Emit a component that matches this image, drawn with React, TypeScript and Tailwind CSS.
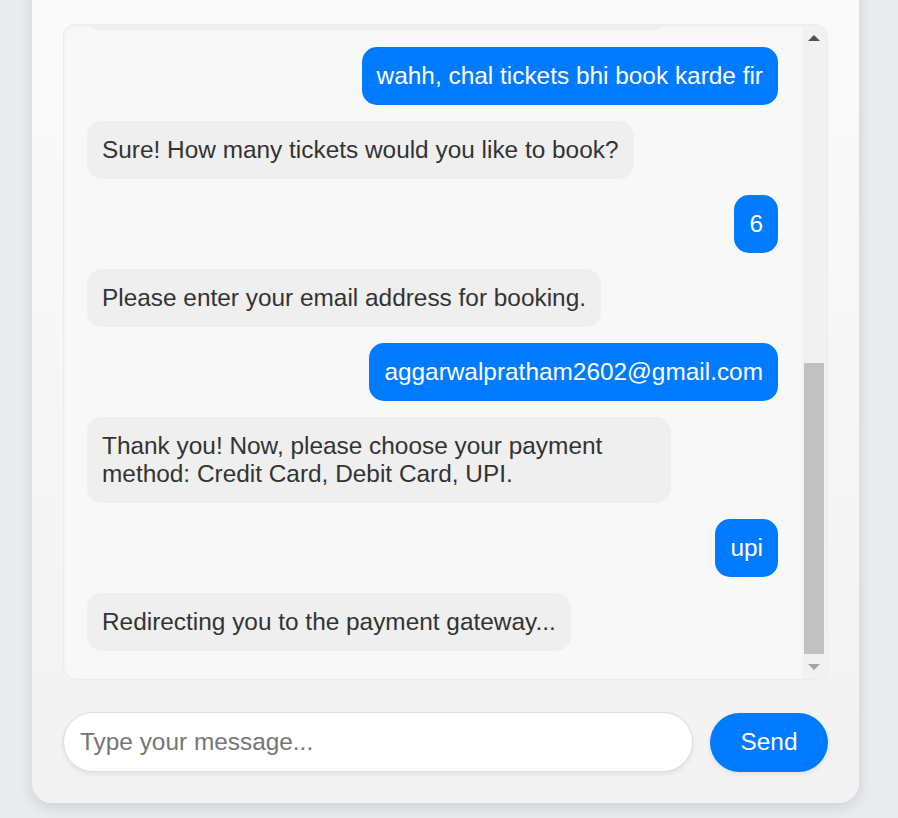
import React from "react";

type Msg = { from: "bot" | "user"; text: string };

const messages: Msg[] = [
  { from: "user", text: "wahh, chal tickets bhi book karde fir" },
  { from: "bot", text: "Sure! How many tickets would you like to book?" },
  { from: "user", text: "6" },
  { from: "bot", text: "Please enter your email address for booking." },
  { from: "user", text: "aggarwalpratham2602@gmail.com" },
  {
    from: "bot",
    text: "Thank you! Now, please choose your payment method: Credit Card, Debit Card, UPI.",
  },
  { from: "user", text: "upi" },
  { from: "bot", text: "Redirecting you to the payment gateway..." },
];

export default function App() {
  return (
    <div
      className="h-[818px] w-[898px] overflow-hidden bg-[#e9ecef]"
      style={{ fontFamily: '"Liberation Sans", Arial, sans-serif' }}
    >
      <div className="ml-8 mt-[-57px] w-[827px] rounded-[20px] bg-gradient-to-b from-[#fbfbfb] to-[#f2f2f2] px-[31px] pb-[31px] pt-[81px] shadow-[0_4px_14px_rgba(0,0,0,0.12)]">
        <div className="flex h-[656px] overflow-hidden rounded-xl border border-[#ececec] bg-[#f8f8f8] shadow-[inset_0_1px_4px_rgba(0,0,0,0.04)]">
          <div className="flex flex-1 flex-col gap-4 pl-[23px] pr-6">
            <div className="mt-[-52px] h-[58px] w-[581px] shrink-0 self-start rounded-[15px] bg-[#efefef]" />
            {messages.map((m, i) =>
              m.from === "user" ? (
                <div
                  key={i}
                  className="max-w-[583px] self-end rounded-[15px] bg-[#007bff] px-[15px] py-[15px] text-[24.4px] leading-[28px] text-white"
                >
                  {m.text}
                </div>
              ) : (
                <div
                  key={i}
                  className="max-w-[584px] self-start rounded-[15px] bg-[#efefef] px-[15px] py-[15px] text-[24.4px] leading-[28px] text-[#333333]"
                >
                  {m.text}
                </div>
              )
            )}
          </div>
          <div className="flex w-[25px] shrink-0 flex-col items-center bg-[#f1f1f1] pr-px">
            <div className="flex h-[25px] w-full items-center justify-center">
              <div className="h-0 w-0 border-x-[6px] border-b-[6px] border-x-transparent border-b-[#505050]" />
            </div>
            <div className="flex w-full flex-1 flex-col justify-end px-[2px]">
              <div className="h-[291px] w-full bg-[#c1c1c1]" />
            </div>
            <div className="flex h-[25px] w-full items-center justify-center">
              <div className="h-0 w-0 border-x-[6px] border-t-[6px] border-x-transparent border-t-[#a3a3a3]" />
            </div>
          </div>
        </div>
        <div className="mt-8 flex items-center gap-[17px]">
          <input
            type="text"
            placeholder="Type your message..."
            className="h-[60px] flex-1 rounded-full border border-[#dddddd] bg-white px-[16px] text-[24.4px] text-[#333333] shadow-[0_2px_5px_rgba(0,0,0,0.08)] outline-none placeholder:text-[#757575]"
          />
          <button className="h-[59px] w-[118px] rounded-full bg-[#007bff] text-[24.4px] text-white shadow-[0_2px_5px_rgba(0,0,0,0.08)]">
            Send
          </button>
        </div>
      </div>
    </div>
  );
}
